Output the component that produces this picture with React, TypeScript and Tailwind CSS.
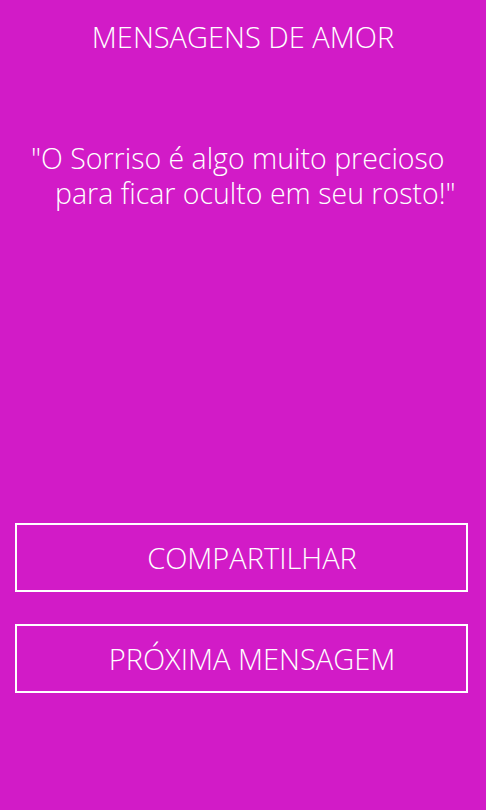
export default function App() {
  return (
    <div
      className="flex h-[810px] w-[486px] flex-col bg-[#d21bc7] text-white"
      style={{ fontFamily: '"Open Sans", "Noto Sans", sans-serif' }}
    >
      <h1 className="pt-[17px] text-center text-[29px] font-light leading-[40px]">MENSAGENS DE AMOR</h1>

      <div className="mt-[84px] flex flex-col text-[28.5px] font-light leading-[35px]">
        <span className="pl-[31px]">"O Sorriso é algo muito precioso</span>
        <span className="pl-[55px]">para ficar oculto em seu rosto!"</span>
      </div>

      <div className="mt-auto flex flex-col gap-[32px] pb-[117px] pl-[15px] pr-[18px]">
        <button
          type="button"
          className="h-[69px] border-2 border-white pl-[21px] text-[29px] font-light"
        >
          COMPARTILHAR
        </button>
        <button
          type="button"
          className="h-[69px] border-2 border-white pl-[21px] text-[29px] font-light"
        >
          PRÓXIMA MENSAGEM
        </button>
      </div>
    </div>
  );
}
